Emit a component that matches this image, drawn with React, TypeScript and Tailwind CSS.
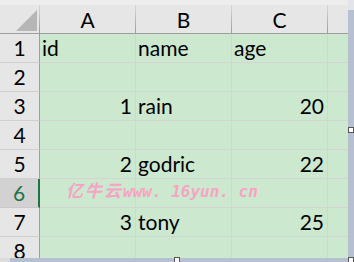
const cols = ["A", "B", "C"];

const rows: (string | number | null)[][] = [
  ["id", "name", "age"],
  [null, null, null],
  [1, "rain", 20],
  [null, null, null],
  [2, "godric", 22],
  [null, null, null],
  [3, "tony", 25],
  [null, null, null],
];

const SELECTED_ROW = 6;

function HeaderSep() {
  return <div className="w-px self-stretch bg-linear-to-b from-[#d9d9d9] to-[#9c9c9c]" />;
}

function Handle({ className }: { className: string }) {
  return <div className={`absolute size-[6px] border border-[#555] bg-white ${className}`} />;
}

export default function App() {
  return (
    <div
      className="relative flex h-[262px] w-[354px] flex-col overflow-hidden bg-[#cce8cf] text-[21px] text-black"
      style={{ fontFamily: "Lato, 'Liberation Sans', sans-serif" }}
    >
      <div className="flex h-[258px]">
        <div className="flex w-[348px] flex-col">
          {/* column headers */}
          <div className="flex h-[34px] flex-col bg-[#e6e6e6]">
            <div className="h-[5px] bg-[#ededed]" />
            <div className="flex h-[29px] border-b border-[#9e9e9e]">
              <div className="flex w-[40px]">
                <div className="flex flex-1 items-end justify-end pb-[2px] pr-[2px]">
                  <svg width="21" height="21" viewBox="0 0 21 21">
                    <polygon points="21,0 21,21 0,21" fill="#b6b6b6" />
                  </svg>
                </div>
                <HeaderSep />
              </div>
              {cols.map((c) => (
                <div key={c} className="flex w-[96px]">
                  <div className="flex flex-1 items-end justify-center pb-[1px] leading-[24px]">{c}</div>
                  <HeaderSep />
                </div>
              ))}
              <div className="w-[20px]" />
            </div>
          </div>

          {/* grid */}
          <div className="flex-1 overflow-hidden">
            {rows.map((r, i) => {
              const n = i + 1;
              const sel = n === SELECTED_ROW;
              return (
                <div key={n} className="flex h-[29px]">
                  <div
                    className={
                      sel
                        ? "flex w-[40px] items-end justify-center border-r-2 border-b border-r-[#217346] border-b-[#c8c8c8] bg-[#d2d2d2] pb-[2px] leading-[24px] text-[#217346]"
                        : "flex w-[40px] items-end justify-center border-r border-b border-r-[#9e9e9e] border-b-[#d0d0d0] bg-[#e6e6e6] pb-[2px] leading-[24px]"
                    }
                  >
                    {n}
                  </div>
                  {r.map((v, j) => (
                    <div
                      key={j}
                      className={`flex w-[96px] items-end border-r border-b border-[#d4d4d4] pb-[2px] pl-[2px] pr-[3px] leading-[24px] ${
                        typeof v === "number" ? "justify-end" : "justify-start"
                      }`}
                    >
                      {v}
                    </div>
                  ))}
                  <div className="w-[20px] border-b border-[#d4d4d4]" />
                </div>
              );
            })}
          </div>
        </div>
        <div className="flex w-[6px] flex-col bg-[#b6c0d1]">
          <div className="h-[10px] bg-[#e3e5ea]" />
        </div>
      </div>
      <div className="flex h-[4px]">
        <div className="w-[10px] bg-[#dcdcdc]" />
        <div className="flex-1 bg-[#b6c0d1]" />
      </div>

      {/* watermark */}
      <div className="pointer-events-none absolute left-[66px] top-[177px] flex items-baseline font-bold italic text-[#f5a5c3]">
        <span className="tracking-[2px] text-[17px]" style={{ fontFamily: "'Noto Sans CJK SC', sans-serif" }}>
          亿牛云
        </span>
        <span className="text-[16px]" style={{ fontFamily: "'DejaVu Sans Mono', monospace" }}>
          www. 16yun. cn
        </span>
      </div>

      <Handle className="left-[348px] top-[127px]" />
      <Handle className="left-[174px] top-[257px]" />
      <Handle className="left-[348px] top-[257px]" />
    </div>
  );
}
